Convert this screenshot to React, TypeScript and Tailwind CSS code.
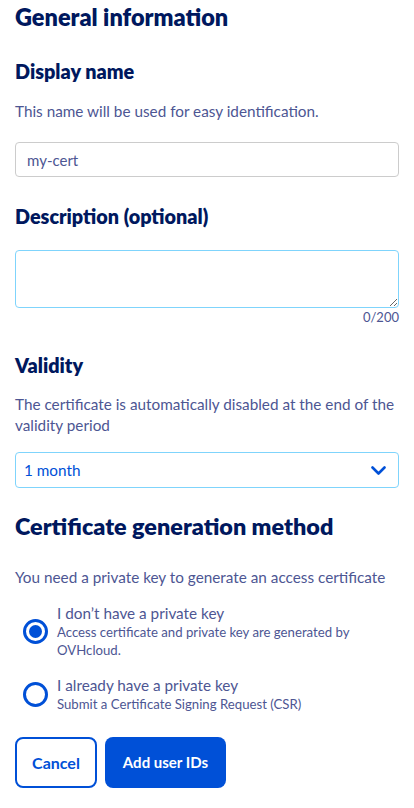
const font = { fontFamily: "'Source Sans Pro', Lato, 'Noto Sans', sans-serif" };

function Radio({ checked, label, hint }: { checked: boolean; label: string; hint: string }) {
  return (
    <label className="flex items-center gap-[9px] pl-[8px]">
      <span className="flex h-[25px] w-[25px] shrink-0 items-center justify-center rounded-full border-[3px] border-[#0050d7] bg-white">
        {checked ? <span className="h-[13px] w-[13px] rounded-full bg-[#0050d7]" /> : null}
      </span>
      <span className="flex flex-col">
        <span className="text-[15.3px] leading-[20px] text-[#4d5693]">{label}</span>
        <span className="text-[13.2px] leading-[18px] text-[#4d5693]">{hint}</span>
      </span>
    </label>
  );
}

export default function App() {
  return (
    <div style={font} className="min-h-[808px] bg-white px-[15px] pb-6 text-[#00185e]">
      <h1 className="pt-[2px] text-[23.5px] font-extrabold leading-[30px]">General information</h1>

      <h2 className="mt-[26px] text-[19.8px] font-extrabold leading-[26px]">Display name</h2>
      <p className="mt-[17px] text-[15.3px] leading-[20px] text-[#4d5693]">
        This name will be used for easy identification.
      </p>
      <input
        readOnly
        value="my-cert"
        className="mt-[21px] block h-[35px] w-full rounded-[4px] border border-[#cccccc] px-[11px] text-[15px] text-[#4d5693] outline-none"
      />

      <h2 className="mt-[26px] text-[19.8px] font-extrabold leading-[26px]">Description (optional)</h2>
      <textarea className="mt-[21px] block h-[58px] w-full rounded-[4px] border border-[#7fd4fc] px-[10px] outline-none" />
      <p className="mt-[1px] text-right text-[13px] leading-[16px] text-[#4d5693]">0/200</p>

      <h2 className="mt-[27px] text-[19.8px] font-extrabold leading-[26px]">Validity</h2>
      <p className="mt-[16px] text-[15.3px] leading-[21px] text-[#4d5693]">
        The certificate is automatically disabled at the end of the validity period
      </p>
      <div className="mt-[16px] flex h-[36px] w-full items-center justify-between rounded-[4px] border border-[#7fd4fc] pl-[8px] pr-[12px]">
        <span className="text-[15.3px] text-[#0050d7]">1 month</span>
        <svg width="15" height="9" viewBox="0 0 15 9" fill="none">
          <path d="M1.5 1.5l6 6 6-6" stroke="#0050d7" strokeWidth="2.6" strokeLinecap="round" strokeLinejoin="round" />
        </svg>
      </div>

      <h2 className="mt-[23px] text-[23.4px] font-extrabold leading-[30px]">Certificate generation method</h2>
      <p className="mt-[26px] text-[15.3px] leading-[20px] text-[#4d5693]">
        You need a private key to generate an access certificate
      </p>

      <div className="mt-[16px] flex flex-col gap-[16px]">
        <Radio
          checked
          label="I don’t have a private key"
          hint="Access certificate and private key are generated by OVHcloud."
        />
        <Radio checked={false} label="I already have a private key" hint="Submit a Certificate Signing Request (CSR)" />
      </div>

      <div className="mt-[24px] flex gap-[8px]">
        <button className="h-[51px] w-[82px] rounded-[8px] border-2 border-[#0050d7] bg-white text-[16px] font-bold text-[#0050d7]">
          Cancel
        </button>
        <button className="h-[51px] w-[121px] rounded-[8px] bg-[#0050d7] text-[15px] font-bold text-white">
          Add user IDs
        </button>
      </div>
    </div>
  );
}
